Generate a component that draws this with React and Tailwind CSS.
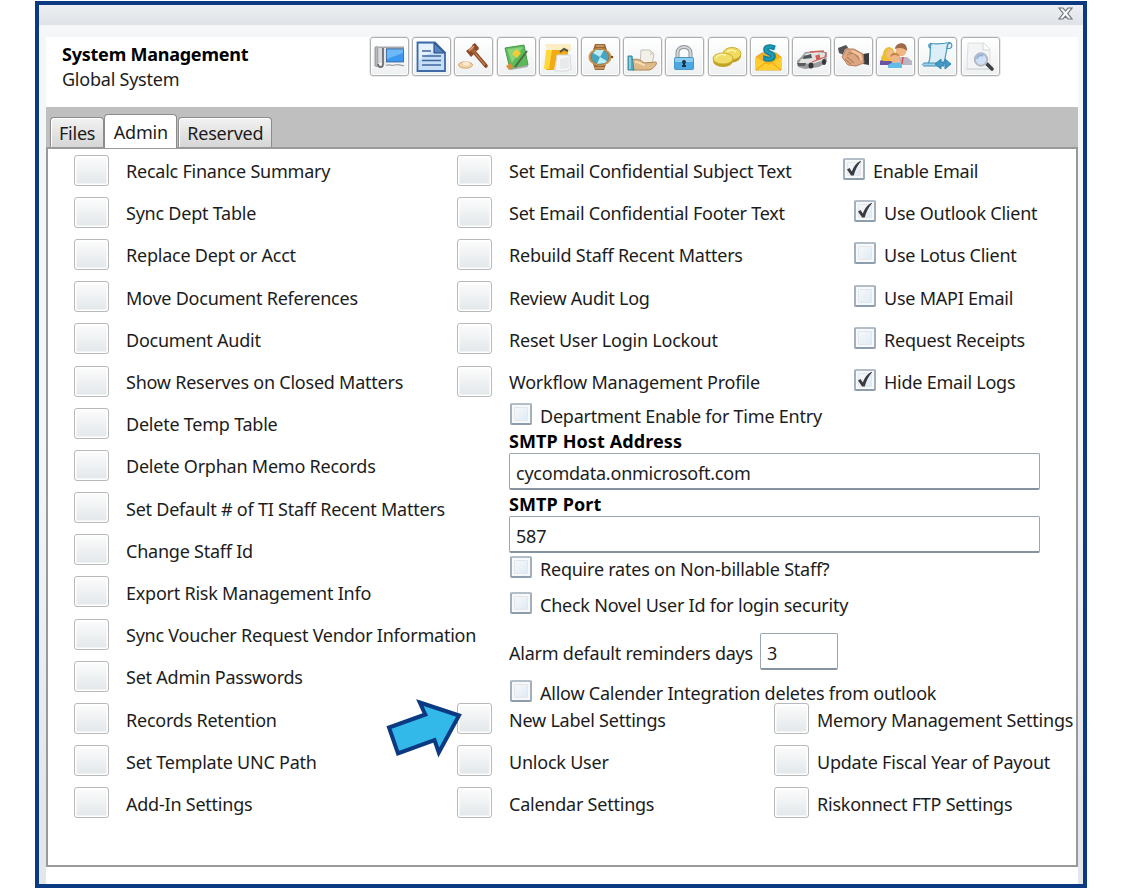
import React, { useState } from "react";
import clsx from "clsx";

const maintenanceActions = [
  "Recalc Finance Summary",
  "Sync Dept Table",
  "Replace Dept or Acct",
  "Move Document References",
  "Document Audit",
  "Show Reserves on Closed Matters",
  "Delete Temp Table",
  "Delete Orphan Memo Records",
  "Set Default # of TI Staff Recent Matters",
  "Change Staff Id",
  "Export Risk Management Info",
  "Sync Voucher Request Vendor Information",
  "Set Admin Passwords",
  "Records Retention",
  "Set Template UNC Path",
  "Add-In Settings",
];

const emailActions = [
  "Set Email Confidential Subject Text",
  "Set Email Confidential Footer Text",
  "Rebuild Staff Recent Matters",
  "Review Audit Log",
  "Reset User Login Lockout",
  "Workflow Management Profile",
];

const settingsActions = ["New Label Settings", "Unlock User", "Calendar Settings"];

const systemActions = [
  "Memory Management Settings",
  "Update Fiscal Year of Payout",
  "Riskonnect FTP Settings",
];

const emailOptions = [
  { label: "Enable Email", checked: true },
  { label: "Use Outlook Client", checked: true, nested: true },
  { label: "Use Lotus Client", nested: true },
  { label: "Use MAPI Email", nested: true },
  { label: "Request Receipts", nested: true },
  { label: "Hide Email Logs", checked: true, nested: true },
];

const toolbarIcons = [
  {
    name: "Workspace",
    art: (
      <>
        <path d="M8 9.500h26v2.500H14v14z" fill="#a4a8ab" />
        <path d="M13 11h3v17h-3z" fill="#e4e6e7" />
        <rect x="16.500" y="12" width="17" height="13" fill="#3b98ee" stroke="#2f5f92" strokeWidth=".8" />
        <path d="M17 12.500h16v3.500l-16 6z" fill="#6cb8fa" />
        <path d="M5 11c0-2 3-2 3 0v17c0 2-3 2-3 0z" fill="#b6b9bb" stroke="#85898c" strokeWidth=".8" />
        <path d="M8 27c0 4 5 4 5 0V11" fill="none" stroke="#6d7174" strokeWidth="1.800" />
        <path d="M9 11h3v15H9z" fill="#d9dbdc" />
        <path d="M16 28.500c3-2 6 1 9-.5s5 1 9 .5" fill="none" stroke="#9da2a5" strokeWidth="1.300" />
      </>
    ),
  },
  {
    name: "Document",
    art: (
      <>
        <path d="M5.500 5.500H23l10 10V34H5.500z" fill="#c6def7" stroke="#3f6aa5" strokeWidth="1.800" />
        <path d="M7 7h14v7L7 23z" fill="#e5f1fc" />
        <path d="M22 6v10h10.500z" fill="#5586bf" stroke="#244a80" />
        <path d="M10 14h9M10 19h19M10 23.500h19M10 28h19" stroke="#3f669b" strokeWidth="1.700" />
      </>
    ),
  },
  {
    name: "Matters",
    art: (
      <>
        <ellipse cx="11.500" cy="28" rx="7" ry="3.200" fill="#f0d2a8" stroke="#d6a873" />
        <ellipse cx="12" cy="26.500" rx="3.500" ry="2" fill="#fbe9cf" />
        <path d="m21 16 11 13" stroke="#8a4523" strokeWidth="3.600" strokeLinecap="round" />
        <path d="m21 16 10 12" stroke="#c98054" strokeWidth="1.200" />
        <path d="m13 14 7-7 5 5-8 7z" fill="#a9623a" />
        <path d="m12 14 3-2 5 5-3 3zM18 8l3-2 4 5-3 3z" fill="#8c4a28" />
        <path d="m15 14 5-5" stroke="#dfa178" strokeWidth="1.500" />
      </>
    ),
  },
  {
    name: "Notes",
    art: (
      <>
        <path d="m8 11 19-3 4 20-18 4z" fill="#5cbb58" stroke="#4b9a50" />
        <path d="m10 12 16-2-11 16z" fill="#8bd47c" />
        <path d="m12 32 18-4 1 2-17 3z" fill="#a9aea9" />
        <path d="m19 12 5 4-4 5-5-4z" fill="#f0cd35" />
        <path d="M30 14 18 30" stroke="#4d6b46" strokeWidth="2" />
        <path d="m9 29 5-3 2 4-4 3z" fill="#dc8f36" />
      </>
    ),
  },
  {
    name: "Folders",
    art: (
      <>
        <path d="M6 7h26v7l-3 1H9z" fill="#fbeec2" />
        <path d="M10 13h19v5H18l-3 15H7z" fill="#f3ab15" />
        <path d="M7 13h6L10 32H5z" fill="#ffd93c" />
        <path d="M18 18h13l1 14-5 2H16z" fill="#f7f7f8" stroke="#d9d8d8" />
        <path d="m21 22 9-2v11l-9 1z" fill="#e8eaed" />
        <path d="m21 15 4-3 4 2" fill="none" stroke="#54503f" strokeWidth="2" />
      </>
    ),
  },
  {
    name: "Time Entry",
    art: (
      <>
        <path d="M14 7h10l2 6H12zM12 27h13l-2 6h-9z" fill="#9a6838" />
        <path d="M15 9h8M14 31h9" stroke="#d2a56b" strokeWidth="1.500" />
        <ellipse cx="19" cy="20" rx="11.500" ry="9" fill="#c89a58" />
        <ellipse cx="19" cy="20" rx="9" ry="7.300" fill="#49a4be" stroke="#8f6b41" strokeWidth=".8" />
        <path d="m12 16 7 4 4-7-8 0zM26 24l-7-4-3 7 8-1z" fill="#b9eef5" />
        <circle cx="31" cy="20" r="1.300" fill="#81501e" />
      </>
    ),
  },
  {
    name: "Services",
    art: (
      <>
        <path d="M18 13h9l4 4-2 11H17z" fill="#f2f0e7" stroke="#c4c1b8" />
        <path d="M27 13v5h4" fill="#dcd7cb" />
        <path d="M9 23c5-2 9 0 12 3l12-1c2 1-2 7-7 8H9z" fill="#e0bb8a" stroke="#ad8556" />
        <path d="M12 25c4-1 6 3 10 3" stroke="#f9deb3" strokeWidth="2" fill="none" />
        <path d="M5 19h4l2 14H5z" fill="#4aa9be" stroke="#3a8da1" />
        <path d="M7 20v12" stroke="#a4dae4" strokeWidth="1.500" />
      </>
    ),
  },
  {
    name: "Security",
    art: (
      <>
        <path d="M12.500 22v-6c0-8 13-8 13 0v6" fill="none" stroke="#8f959a" strokeWidth="4" />
        <path d="M12.500 22v-6c0-8 13-8 13 0v6" fill="none" stroke="#d3d7da" strokeWidth="2" />
        <rect x="9.500" y="20.500" width="19" height="12" rx="1" fill="#4ba8e0" stroke="#4a94c4" />
        <path d="M10 21h18v4H10z" fill="#8acdf0" />
        <circle cx="19" cy="25" r="2" fill="#173547" />
        <path d="M19 25v4M17 29h4" stroke="#173547" strokeWidth="2" />
      </>
    ),
  },
  {
    name: "Finance",
    art: (
      <>
        <ellipse cx="24" cy="19" rx="9" ry="6.500" fill="#c2a01d" />
        <ellipse cx="24" cy="16.500" rx="9" ry="6" fill="#efdb60" stroke="#cbae38" />
        <ellipse cx="15" cy="24" rx="10" ry="6" fill="#c2a020" />
        <ellipse cx="15" cy="21.500" rx="10" ry="5.500" fill="#efdd67" stroke="#cbae38" />
        <path d="M8 21c1-4 7-4 10-3M19 15c3-3 7-2 9 0" fill="none" stroke="#fff6ae" strokeWidth="1.500" />
      </>
    ),
  },
  {
    name: "Payments",
    art: (
      <>
        <path d="m6 20 6-4h14l5 4v13H6z" fill="#f3b51b" stroke="#dea02a" />
        <path d="m6 20 12.500 8L31 20v13H6z" fill="#ffcd2e" />
        <path d="m6 33 10-8M31 33l-10-8" stroke="#e0a01b" />
        <text x="19" y="24" textAnchor="middle" fontSize="22" fontWeight="900" fontFamily="Noto Sans, sans-serif" fill="#1c9db5" stroke="#13829a" strokeWidth="1.500">
          S
        </text>
      </>
    ),
  },
  {
    name: "Incidents",
    art: (
      <>
        <path d="m5 24 5-5 3-4 13-1 8 1 1 10-8 5-14 2-7-2z" fill="#9a9d9e" />
        <path d="m12 17 12-2 9 1-1 7-12 4-13-1 2-4 8-1z" fill="#e2e2e0" />
        <path d="m12 19 7-2 1 4-9 1z" fill="#4c5657" />
        <path d="m18 15 14-1M20 25l13-5M24 19l3-1 1 4-3 1zM34 15v5" fill="#d0605a" stroke="#d0605a" strokeWidth="1.300" />
        <ellipse cx="19" cy="28.500" rx="2.500" ry="3" fill="#353737" />
        <ellipse cx="32" cy="25" rx="2" ry="3" fill="#353737" />
        <path d="M5 26h9l-1 3H6z" fill="#5a5d5d" />
      </>
    ),
  },
  {
    name: "Agreements",
    art: (
      <>
        <path d="m4 11 8-3 3 4-5 6-5-2z" fill="#505357" />
        <path d="m11 12 4-1-4 8-2-2z" fill="#d3d7db" />
        <path d="m29 17 6-1v12l-6-1z" fill="#3a3d40" />
        <path d="m12 12 8 0 9 5 1 9-8 3-8-1-6-8z" fill="#dda681" stroke="#b57f60" />
        <path d="m14 15 7 2 5 6M13 20l7 6M11 22l6 5M19 16l-6 2" stroke="#b98260" strokeWidth="1.200" fill="none" />
        <path d="m18 14 8 4 1 5" stroke="#f3c7a1" strokeWidth="2" fill="none" />
      </>
    ),
  },
  {
    name: "Staff",
    art: (
      <>
        <path d="M4 28v-4l5-3 6 2 3 5zM22 28l2-7 8 2 2 5z" fill="#6b51a5" />
        <path d="m23 20 8 0 5 4v4H23z" fill="#b8b6c3" />
        <path d="M5 22c0-3 2-3 2-6 2-8 10-8 12 0l1 8H7z" fill="#ebc02f" />
        <ellipse cx="14" cy="17" rx="3.500" ry="5" fill="#f2bb88" />
        <circle cx="25" cy="14" r="5.300" fill="#f0b785" />
        <path d="M19 12c0-7 13-9 12 2-3-3-7-4-12-2z" fill="#9c6a47" />
        <path d="m27 20-1 7" stroke="#d54b50" strokeWidth="1.500" />
        <path d="M12 31v-3l5-3h5l4 3v3z" fill="#62bce8" />
        <circle cx="19" cy="21.500" r="4.500" fill="#efb583" />
        <path d="M14 20c1-6 9-5 10 0-5-3-6-2-10 0z" fill="#c28849" />
      </>
    ),
  },
  {
    name: "Scripts",
    art: (
      <>
        <path d="M13 6.500c6 1 14 0 19-1 3 2 2 5 0 6h-3l-3 15H10c4-6 1-14 3-20z" fill="#dceff8" stroke="#4a96bc" strokeWidth="1.200" />
        <path d="M13 6.500c-3 1-3 3 0 5M29 12c0-3 0-6 3-6" fill="none" stroke="#4a96bc" strokeWidth="1.500" />
        <path d="M6 26h15v3H6c-2-1-2-2 0-3z" fill="#9ed0e8" stroke="#3f8fb7" />
        <path d="m23 22-6 5 6 5v-3h3v-4h-3zM27 22l6 5-6 5z" fill="#4299c5" stroke="#3287b3" />
      </>
    ),
  },
  {
    name: "Preview",
    art: (
      <>
        <path d="M7 6h16l6 6v20H6z" fill="#f3f4f5" stroke="#dcdee0" />
        <path d="M22 6v7h7M5 32h24" fill="#fff" stroke="#d0d3d5" />
        <path d="m26 27 5 5" stroke="#3b3f42" strokeWidth="3.600" strokeLinecap="round" />
        <circle cx="20" cy="22.500" r="6.200" fill="#cfe0f6" stroke="#b3b8c1" strokeWidth="2" />
        <path d="M16 22c0-3 4-5 6-3" stroke="#8fb3de" strokeWidth="2" fill="none" />
      </>
    ),
  },
];

const ToolbarButton = ({ name, art }) => (
  <button
    type="button"
    aria-label={name}
    className="h-[39px] w-[39px] shrink-0 rounded-[3px] border border-[#b0b0b0] bg-linear-to-b from-white to-[#edf0f2] shadow-[inset_0_0_0_1px_white,0_0_0_0.500px_#d5d5d5]"
  >
    <svg viewBox="1 1 37 37" className="size-full overflow-visible">
      {art}
    </svg>
  </button>
);

const ActionRow = ({ label, gap = "gap-[17px]" }) => (
  <div className={clsx("flex h-[42.200px] items-center", gap)}>
    <button
      type="button"
      aria-label={label}
      className="h-[31px] w-[35px] shrink-0 rounded-[3px] border border-[#b9b9b9] bg-linear-to-b from-[#fcfcfc] to-[#e2e7ea] shadow-[inset_0_0_0_1.500px_white]"
    />
    <span className="pt-0.5 whitespace-nowrap">{label}</span>
  </div>
);

const CheckBox = ({ label, defaultChecked = false, className }) => {
  const [checked, setChecked] = useState(defaultChecked);

  return (
    <div className={clsx("flex h-[22px] shrink-0 items-center gap-2", className)}>
      <button
        type="button"
        role="checkbox"
        aria-checked={checked}
        aria-label={label}
        onClick={() => setChecked(!checked)}
        className="size-[22px] shrink-0 rounded-[2px] border-2 border-[#a3b0bc] border-t-[#b3bec8] border-b-[#8e9dab] bg-[#f7f8f9] p-[2px]"
      >
        <span className="block size-full rounded-[1px] border border-[#e3e7eb] bg-linear-to-br from-[#f6f8fa] to-[#e0ebf5]">
          {checked && (
            <svg viewBox="0 0 14 14" className="-mt-px -ml-px size-[14px] overflow-visible">
              <path d="M0 7.500 2.500 6l2.300 3.500C6.500 5 9 1 13.500-1.300l.5.600C10.500 3.500 8.300 8 6.700 13.500H4.100z" fill="#3b3b3f" />
            </svg>
          )}
        </span>
      </button>
      <span className="pt-1 whitespace-nowrap">{label}</span>
    </div>
  );
};

const TextField = ({ label, defaultValue, className }) => (
  <input
    type="text"
    aria-label={label}
    defaultValue={defaultValue}
    className={clsx(
      "block h-[37px] shrink-0 rounded-[2px] border border-[#9aa6b1] border-b-2 border-b-[#8593a0] bg-white px-[6px] pt-1 outline-none",
      className
    )}
  />
);

const Tab = ({ label, active }) => (
  <button
    type="button"
    className={clsx(
      "rounded-t-[4px] border border-b-0 border-[#8c8c8c]",
      active
        ? "relative z-10 -mb-px h-[34px] bg-white px-[8.500px]"
        : "h-[30px] bg-linear-to-b from-[#f2f2f2] to-[#d6d6d6] px-2 shadow-[inset_1px_1px_0_white]"
    )}
  >
    {label}
  </button>
);

const App = () => {
  return (
    <div className="h-[889px] w-[1124px] overflow-hidden bg-white pt-px pl-[35px] font-['Noto_Sans','Open_Sans',sans-serif] text-[18px] leading-6 tracking-[-0.230px] text-[#1c1c1c]">
      <div className="relative flex h-[887px] w-[1052px] flex-col border-4 border-[#0b3a82] bg-linear-to-b from-[#f5f6f8] from-50% to-[#e4e7ea] to-90%">
        <div className="flex h-5 shrink-0 items-center justify-end bg-linear-to-b from-[#edeff2] to-[#dfe3e7] pr-[10px]">
          <svg viewBox="0 0 15 13" className="-mt-1 h-[13px] w-[15px]">
            <path
              d="M1 1h4l2.500 2.800L10 1h4L9.800 6.500 14 12h-4L7.500 9.200 5 12H1l4.200-5.500z"
              fill="#f7f8f9"
              stroke="#72777b"
              strokeWidth="1.200"
            />
          </svg>
        </div>

        <div className="mt-3 mr-[5px] ml-[7px] flex min-h-0 flex-1 flex-col bg-white">
          <header className="flex h-[70px] shrink-0">
            <div className="w-[324px] shrink-0 pt-[5px] pl-4">
              <h1 className="font-bold text-black">System Management</h1>
              <p className="pt-px">Global System</p>
            </div>
            <div className="flex gap-[3.200px]">
              {toolbarIcons.map((icon) => (
                <ToolbarButton key={icon.name} name={icon.name} art={icon.art} />
              ))}
            </div>
          </header>

          <nav className="flex h-10 shrink-0 items-end bg-[#bfbfbf] pl-1">
            <Tab label="Files" />
            <Tab label="Admin" active />
            <div className="ml-px flex">
              <Tab label="Reserved" />
            </div>
          </nav>

          <main className="flex h-[720px] shrink-0 border-2 border-[#999] bg-white pl-[26px]">
            <div className="w-[383px] shrink-0">
              {maintenanceActions.map((label) => (
                <ActionRow key={label} label={label} />
              ))}
            </div>

            <div className="flex min-w-0 flex-1 flex-col">
              <div className="flex">
                <div className="w-[386px] shrink-0">
                  {emailActions.map((label) => (
                    <ActionRow key={label} label={label} />
                  ))}
                </div>
                <div>
                  {emailOptions.map((option) => (
                    <div
                      key={option.label}
                      className={clsx("flex h-[42.200px] items-center pb-[2px]", option.nested && "pl-[11px]")}
                    >
                      <CheckBox label={option.label} defaultChecked={option.checked} />
                    </div>
                  ))}
                </div>
              </div>

              <div className="flex h-[295.400px] shrink-0 flex-col items-start pt-px pl-[52px]">
                <CheckBox label="Department Enable for Time Entry" className="ml-px" />
                <label className="mt-1 h-6 shrink-0 font-bold tracking-[0.100px] text-black">SMTP Host Address</label>
                <TextField label="SMTP Host Address" defaultValue="cycomdata.onmicrosoft.com" className="w-[531px]" />
                <label className="h-[26px] shrink-0 pt-0.5 font-bold tracking-[0.100px] text-black">SMTP Port</label>
                <TextField label="SMTP Port" defaultValue="587" className="w-[531px]" />
                <CheckBox label="Require rates on Non-billable Staff?" className="mt-[3px] ml-px" />
                <CheckBox label="Check Novel User Id for login security" className="mt-[14px] ml-px" />
                <div className="mt-[19px] flex shrink-0 items-center">
                  <span className="w-[251px] pt-0.5 whitespace-nowrap">Alarm default reminders days</span>
                  <TextField label="Alarm default reminders days" defaultValue="3" className="w-[78px]" />
                </div>
                <CheckBox label="Allow Calender Integration deletes from outlook" className="mt-[10px] ml-px" />
              </div>

              <div className="flex">
                <div className="w-[317px] shrink-0">
                  {settingsActions.map((label) => (
                    <ActionRow key={label} label={label} />
                  ))}
                </div>
                <div>
                  {systemActions.map((label) => (
                    <ActionRow key={label} label={label} gap="gap-2" />
                  ))}
                </div>
              </div>
            </div>
          </main>
        </div>

        {/* pointer to New Label Settings */}
        <svg viewBox="0 0 80 64" className="pointer-events-none absolute top-[690px] left-[345px] h-16 w-20">
          <path
            d="M35.800 7.500 75 20.500 54.800 57.500 50.500 45 14 58.500 5 32.500 41.300 19.500z"
            fill="#33b8ea"
            stroke="#0b3a82"
            strokeWidth="4"
          />
        </svg>
      </div>
    </div>
  );
};

export default App;
